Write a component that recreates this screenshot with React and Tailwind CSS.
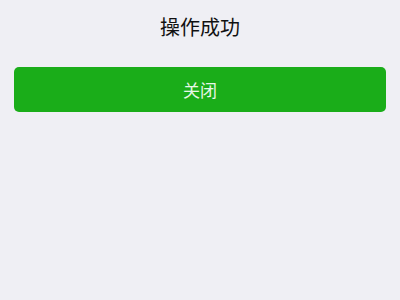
import React from "react";

function App() {
    return (
        <div
            className="w-[400px] h-[300px] bg-[#efeff4] px-[14px] pt-[11px]"
            style={{ fontFamily: '"Noto Sans CJK SC", "Noto Sans", sans-serif' }}
        >
            {/* Title */}
            <h1 className="text-center text-[20px] leading-[32px] text-[#111]">
                操作成功
            </h1>

            {/* Close button */}
            <button className="mt-[24px] w-full h-[45px] rounded-[5px] bg-[#1aad19] text-white/90 text-[17px] flex items-center justify-center">
                关闭
            </button>
        </div>
    );
}

export default App;
